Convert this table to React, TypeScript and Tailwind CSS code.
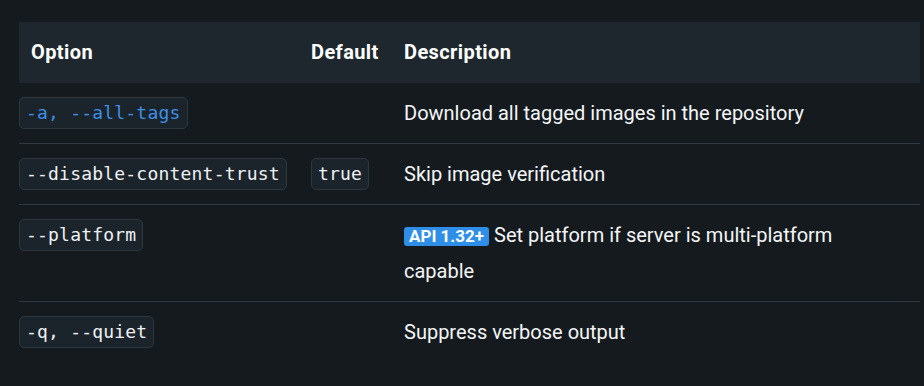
import React from "react";

const mono = { fontFamily: '"DejaVu Sans Mono", "Liberation Mono", monospace' };

function Code({ children, blue }: { children: React.ReactNode; blue?: boolean }) {
  return (
    <span
      style={mono}
      className={`inline-block rounded-[5px] border border-[#2d3740] bg-[#1c242b] px-[6px] text-[18px] leading-[30px] tracking-[0.2px] ${
        blue ? "text-[#3d8fe6]" : "text-[#eef1f4]"
      }`}
    >
      {children}
    </span>
  );
}

type Row = { opt: string; blue?: boolean; def?: string; desc: React.ReactNode };

const rows: Row[] = [
  { opt: "-a, --all-tags", blue: true, desc: "Download all tagged images in the repository" },
  { opt: "--disable-content-trust", def: "true", desc: "Skip image verification" },
  {
    opt: "--platform",
    desc: (
      <>
        <span className="inline-block rounded-[3px] bg-[#2f8fe8] px-[5px] align-baseline text-[17px] font-bold leading-[19px] text-white">
          API 1.32+
        </span>{" "}
        Set platform if server is multi-platform capable
      </>
    ),
  },
  { opt: "-q, --quiet", desc: "Suppress verbose output" },
];

export default function App() {
  return (
    <div
      className="h-[386px] w-[924px] bg-[#141a1e] pl-[19px] pr-[4px] pt-[22px] text-white"
      style={{ fontFamily: 'Roboto, "Liberation Sans", sans-serif' }}
    >
      <div className="grid grid-cols-[280px_93px_1fr] bg-[#1e272e] pb-[13px] pt-3 text-[20px] font-bold leading-9 tracking-[0.4px]">
        <div className="px-3">Option</div>
        <div className="px-3">Default</div>
        <div className="px-3">Description</div>
      </div>
      {rows.map((r, i) => (
        <div
          key={i}
          className={`grid grid-cols-[280px_93px_1fr] py-3 text-[20px] leading-9 ${
            i < rows.length - 1 ? "border-b border-[#2d3842]" : ""
          }`}
        >
          <div className="flex h-9 items-center pr-3">
            <Code blue={r.blue}>{r.opt}</Code>
          </div>
          <div className="flex h-9 items-center px-3">{r.def && <Code>{r.def}</Code>}</div>
          <div className="px-3">
            <div className="max-w-[460px] text-[#f4f6f8]">{r.desc}</div>
          </div>
        </div>
      ))}
    </div>
  );
}
